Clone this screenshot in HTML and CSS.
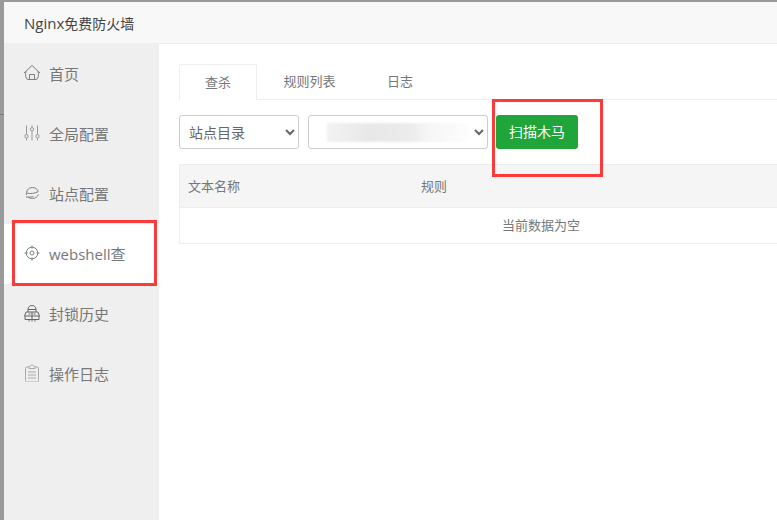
FILE: index.html
```html
<!DOCTYPE html>
<html lang="zh">
<head>
<meta charset="utf-8">
<title>Nginx免费防火墙</title>
<link rel="stylesheet" href="styles.css">
</head>
<body>
<div class="backdrop-line"></div>
<div class="window">
  <header class="titlebar"><span class="brand">Nginx</span>免费防火墙</header>
  <div class="body">
    <nav class="sidebar">
      <a class="nav-item">
        <svg class="icon" viewBox="0 0 18 18"><path d="M1 9 9 1.500 17 9M3.200 7.500c-.5 1-.7 2-.7 3 0 2.500 1 5 2.500 5h8c1.500 0 2.500-2.500 2.500-5 0-1-.2-2-.7-3M6.500 15.500v-5h5v5"/></svg>
        <span>首页</span>
      </a>
      <a class="nav-item">
        <svg class="icon thin" viewBox="0 0 18 18"><path d="M3.500 1.500v9M3.500 14v2.500M9 1.500v2M9 7v9.500M14.500 1.500v9M14.500 14v2.500"/><circle cx="3.500" cy="12.200" r="1.700"/><circle cx="9" cy="5.300" r="1.700"/><circle cx="14.500" cy="12.200" r="1.700"/></svg>
        <span>全局配置</span>
      </a>
      <a class="nav-item">
        <svg class="icon" viewBox="0 0 18 18"><path d="M3.500 11C2.800 7.500 5 3.500 9.500 3.500c2.800 0 4.800 1.700 5.500 3.500M3.500 9c3.500 1 8.500.5 12-1.500M15.300 10.500c-.8 2.500-3 4-5.800 4-2 0-3.500-.7-4.500-1.800M3 13c2.500.3 5 .2 7.500-.3"/></svg>
        <span>站点配置</span>
      </a>
      <a class="nav-item active">
        <svg class="icon" viewBox="0 0 18 18"><circle cx="9" cy="9" r="5.800"/><circle cx="9" cy="9" r="2"/><path d="M9 1.500v3M9 13.500v3M1.500 9h3M13.500 9h3"/></svg>
        <span>webshell查</span>
      </a>
      <a class="nav-item">
        <svg class="icon dark" viewBox="0 0 18 18"><path d="M5 8V5.500C5 3 6.800 1.500 9 1.500s4 1.500 4 4V8M5 5.500h8M3 8h12M3 8l-1.500 4h15L15 8M2 12v3.500h14V12M9 8v9.500M6 15.500v2M12 15.500v2M5.500 10h2M10.500 10h2"/></svg>
        <span>封锁历史</span>
      </a>
      <a class="nav-item">
        <svg class="icon pale" viewBox="0 0 18 18"><path d="M6 3H4C3 3 2.500 3.500 2.500 4.500v12c0 1 .5 1.500 1.500 1.500h10c1 0 1.500-.5 1.500-1.500v-12c0-1-.5-1.500-1.500-1.500h-2M6 4.500v-2L7.500 2 9 .7 10.500 2l1.500.5v2zM5 8h8M5 11h8M5 14h8"/></svg>
        <span>操作日志</span>
      </a>
    </nav>
    <main class="content">
      <div class="tabs">
        <div class="tab current">查杀</div>
        <div class="tab">规则列表</div>
        <div class="tab tab-log">日志</div>
      </div>
      <div class="toolbar">
        <select class="select select-type"><option>站点目录</option></select>
        <div class="site-select">
          <select class="select select-site"><option>&nbsp;</option></select>
          <div class="smudge"></div>
        </div>
        <button class="scan-btn">扫描木马</button>
      </div>
      <div class="table">
        <div class="table-head">
          <div class="col-name">文本名称</div>
          <div class="col-rule">规则</div>
        </div>
        <div class="table-empty">当前数据为空</div>
      </div>
    </main>
  </div>
</div>
<div class="mark mark-nav"></div>
<div class="mark mark-btn"></div>
</body>
</html>
```
FILE: styles.css
```css
* { box-sizing: border-box; }
html, body { height: 100%; }
body {
  margin: 0;
  overflow: hidden;
  background: #9a9a9a;
  padding: 2px 0 0 4px;
  font-family: "Open Sans", "Noto Sans CJK SC", sans-serif;
  font-size: 14px;
  color: #666;
}
.backdrop-line {
  position: absolute;
  left: 0;
  top: 114px;
  width: 4px;
  height: 1px;
  background: #777;
}
.window {
  height: 518px;
  width: 773px;
  background: #fff;
  display: flex;
  flex-direction: column;
  border-top-left-radius: 2px;
}
.titlebar {
  height: 42px;
  flex: none;
  background: #f8f8f8;
  border-bottom: 1px solid #eee;
  padding-left: 20px;
  line-height: 42px;
  font-size: 14px;
  color: #444;
}
.brand { font-size: 15px; }
.body { flex: 1; display: flex; min-height: 0; }
.sidebar {
  width: 155px;
  flex: none;
  background: #efefef;
  display: flex;
  flex-direction: column;
}
.nav-item {
  height: 60px;
  flex: none;
  display: flex;
  align-items: center;
  padding: 0 0 2px 19px;
  gap: 8px;
  color: #777;
  font-size: 15px;
}
.nav-item.active { background: #fff; }
.icon {
  width: 18px;
  height: 18px;
  flex: none;
  fill: none;
  stroke: #808080;
  stroke-width: 1;
}
.icon.thin { stroke: #999; }
.icon.dark { stroke: #666; }
.icon.pale { stroke: #aaa; }
.content { flex: 1; min-width: 0; padding: 20px 0 0 20px; overflow: hidden; }
.tabs {
  display: flex;
  height: 36px;
  border-bottom: 1px solid #eee;
  width: 640px;
}
.tab {
  height: 36px;
  line-height: 34px;
  width: 78px;
  text-align: center;
  font-size: 13px;
  color: #777;
}
.tab:nth-child(2) { width: 105px; }
.tab-log { width: 40px; margin-left: 18px; }
.tab.current {
  background: #fff;
  border: 1px solid #eee;
  border-bottom: 0;
  border-top-left-radius: 2px;
  border-top-right-radius: 2px;
  position: relative;
}
.toolbar {
  display: flex;
  align-items: center;
  margin-top: 15px;
  gap: 9px;
}
.select {
  height: 34px;
  background: #fff;
  border: 1px solid #ccc;
  border-radius: 3px;
  font-family: inherit;
  font-size: 14px;
  color: #666;
  padding: 0 4px 0 5px;
  display: block;
}
.select-type { width: 120px; }
.select-site { width: 180px; }
.site-select { position: relative; }
.smudge {
  position: absolute;
  left: 19px;
  top: 8px;
  width: 142px;
  height: 19px;
  background: linear-gradient(90deg, #f2f2f2 0, #e8e8e8 30%, #ececec 60%, #f6f6f6 72%, #fdfdfd 100%);
  filter: blur(1px);
}
.scan-btn {
  width: 82px;
  height: 34px;
  border: 0;
  border-radius: 3px;
  background: #20a53a;
  color: #fff;
  font-family: inherit;
  font-size: 14px;
  padding: 0 0 2px;
  margin-left: -1px;
}
.table {
  margin-top: 15px;
  width: 640px;
  border: 1px solid #eee;
  border-right: 0;
}
.table-head {
  height: 43px;
  background: #f5f5f5;
  border-bottom: 1px solid #eee;
  display: flex;
  align-items: center;
  padding-bottom: 2px;
  font-size: 13px;
  color: #777;
}
.col-name { width: 241px; padding-left: 8px; }
.col-rule { flex: 1; }
.table-empty {
  height: 35px;
  line-height: 34px;
  font-size: 13px;
  color: #777;
  padding-left: 322px;
}
.mark {
  position: absolute;
  border: 3px solid #fc3a3a;
  pointer-events: none;
}
.mark-nav { left: 12px; top: 220px; width: 145px; height: 66px; }
.mark-btn { left: 492px; top: 99px; width: 111px; height: 78px; }
```
